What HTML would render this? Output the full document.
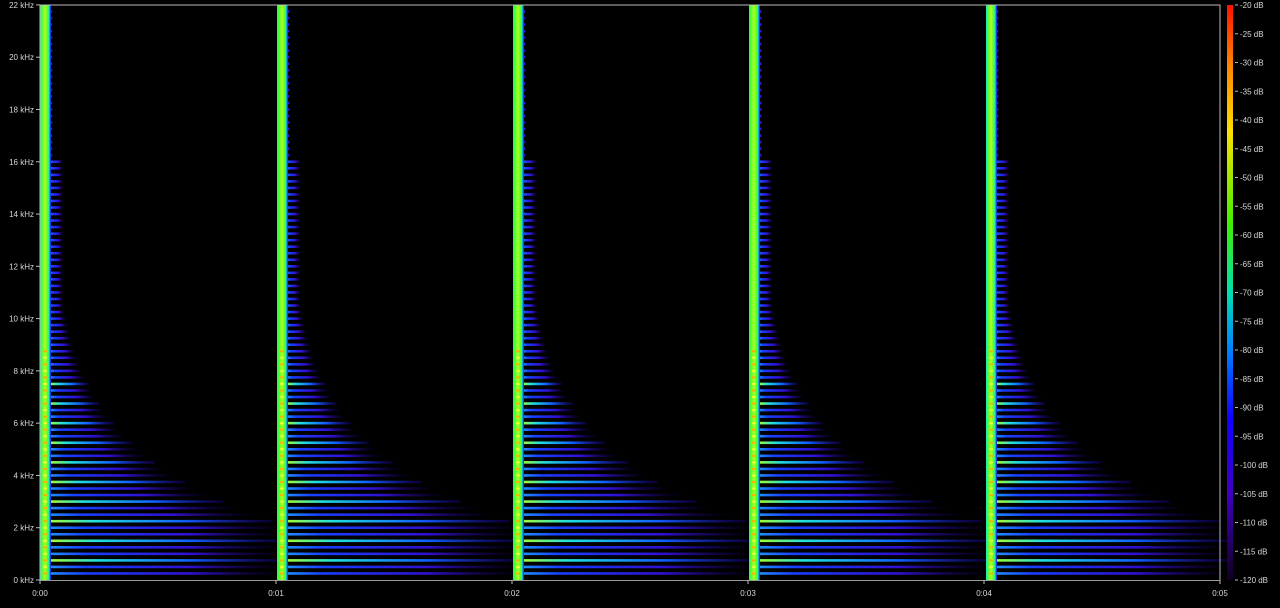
<!DOCTYPE html>
<html><head><meta charset="utf-8"><style>
html,body{margin:0;padding:0;background:#000;width:1280px;height:608px;overflow:hidden}
svg text{font-family:"Liberation Sans",sans-serif;font-size:8px;fill:#d8d8d8}
</style></head><body>
<svg id="s" width="1280" height="608" xmlns="http://www.w3.org/2000/svg">
<defs>
<linearGradient id="col" x1="0" y1="0" x2="1" y2="0">
<stop offset="0" stop-color="#20e0ff"/><stop offset="0.1" stop-color="#30ff40"/><stop offset="0.45" stop-color="#b0ff20"/><stop offset="0.7" stop-color="#50ff30"/><stop offset="0.82" stop-color="#20e8c0"/><stop offset="0.92" stop-color="#1060ff"/><stop offset="1" stop-color="#1010c0"/>
</linearGradient>
<linearGradient id="hb" x1="0" y1="0" x2="1" y2="0">
<stop offset="0" stop-color="#2090ff"/><stop offset="0.15" stop-color="#1840ff"/><stop offset="0.6" stop-color="#3010d0"/><stop offset="1" stop-color="#200060" stop-opacity="0"/>
</linearGradient>
<linearGradient id="hc" x1="0" y1="0" x2="1" y2="0">
<stop offset="0" stop-color="#a0ff30"/><stop offset="0.2" stop-color="#20e0e0"/><stop offset="0.6" stop-color="#1060ff"/><stop offset="1" stop-color="#2000a0" stop-opacity="0.3"/>
</linearGradient>
<linearGradient id="cb" x1="0" y1="0" x2="0" y2="1">
<stop offset="0" stop-color="#ff1000"/><stop offset="0.1" stop-color="#ff8000"/><stop offset="0.22" stop-color="#ffe000"/><stop offset="0.38" stop-color="#40f000"/><stop offset="0.5" stop-color="#00e0b0"/><stop offset="0.6" stop-color="#0080ff"/><stop offset="0.72" stop-color="#1000ff"/><stop offset="0.85" stop-color="#4000c0"/><stop offset="1" stop-color="#100020"/>
</linearGradient>
</defs>
<g id="h"></g>
<g id="c"></g>
<rect x="1227" y="5" width="6" height="575" fill="url(#cb)"/>
<path d="M40 580V5H1220V580" fill="none" stroke="#bbb" stroke-width="1"/>
<line x1="40" y1="580.5" x2="1220" y2="580.5" stroke="#999" stroke-width="1"/>
<g id="t"></g>
</svg>
<script>
var NS="http://www.w3.org/2000/svg";
function el(p,n,a,txt){var e=document.createElementNS(NS,n);for(var k in a)e.setAttribute(k,a[k]);if(txt!==undefined)e.textContent=txt;document.getElementById(p).appendChild(e);}
var xs=[40,277,513,749,986];
for(var i=0;i<xs.length;i++){var x0=xs[i];
 for(var f=0.25;f<22;f+=0.25){var y=580-f*26.14;var L;
  if(f<=2.1)L=234;else L=Math.max(14,234*Math.exp(-(f-2.1)/3));
  if(f>16)L=3;
  var g=(Math.round(f*4)%3==0&&f<8)?"url(#hc)":"url(#hb)";
  el("h","rect",{x:x0+10,y:y-1.3,width:L,height:2.6,fill:g});}
 el("c","rect",{x:x0,y:5,width:11,height:575,fill:"url(#col)"});
 for(var f=0.25;f<9;f+=0.25){var y=580-f*26.14;el("c","rect",{x:x0+3,y:y-1,width:4,height:2,fill:(Math.round(f*4)%2?"#ffb000":"#e8ff30")});}
}
for(var k=0;k<=22;k+=2){var y=580-k*26.14;el("t","line",{x1:36,x2:40,y1:y,y2:y,stroke:"#bbb"});el("t","text",{x:34,y:y+3,"text-anchor":"end"},k+" kHz");}
for(var j=0;j<=5;j++){var x=40+j*236;el("t","line",{x1:x,x2:x,y1:580,y2:584,stroke:"#bbb"});el("t","text",{x:x,y:596,"text-anchor":"middle"},"0:0"+j);}
for(var d=0;d<=20;d++){var y=5+d*575/20;el("t","line",{x1:1235,x2:1238,y1:y,y2:y,stroke:"#bbb"});el("t","text",{x:1240,y:y+3},(-20-5*d)+" dB");}
</script>
</body></html>
